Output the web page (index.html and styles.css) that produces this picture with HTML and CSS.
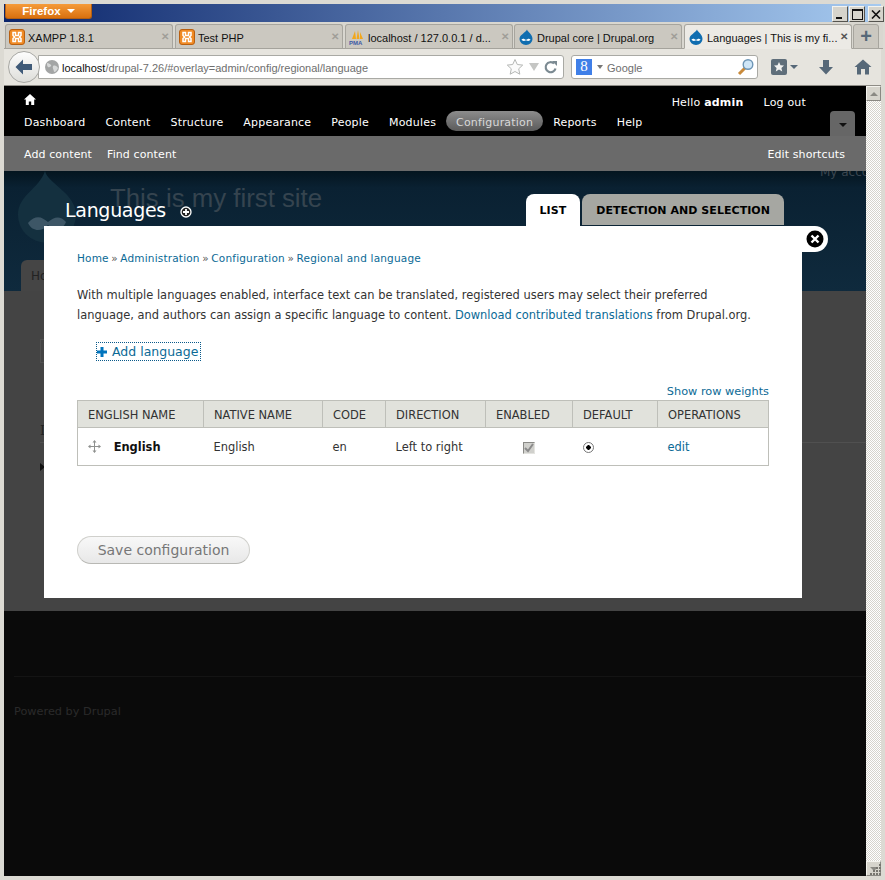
FILE: index.html
```html
<!DOCTYPE html>
<html lang="en">
<head>
    <meta charset="UTF-8">
    <meta name="viewport" content="width=device-width, initial-scale=1.0">
    <title>Languages | This is my first site</title>
    <link rel="stylesheet" href="styles.css">
</head>
<body>
    <svg class="defs" width="0" height="0">
        <symbol id="xampp" viewBox="0 0 16 16">
            <rect x="0.5" y="0.5" width="15" height="15" rx="2.5" fill="#f08a24" stroke="#b85f10"/>
            <path d="M4 3.5h2.5v3h3v-3H12v3l-1.5 1.5L12 9.5v3H9.500v-3h-3v3H4v-3L5.500 8 4 6.500z" fill="none" stroke="#fff" stroke-width="1.500"/>
        </symbol>
        <symbol id="drupal" viewBox="0 0 16 16">
            <path d="M9 0.500C9.500 3 14.500 5 14.500 10a6.500 6 0 0 1-13 0C1.500 5.500 7.500 4 9 0.500z" fill="#0f6db0"/>
            <path d="M3.500 10.500c1.500-1.500 3-.5 4.500.5 1.500-1 3-2 4.500-.5-1 2-3 1.500-4.500.8-1.500.7-3.500 1.200-4.500-.8z" fill="#fff"/>
        </symbol>
        <symbol id="pma" viewBox="0 0 16 16">
            <path d="M3 10L6 2l1 8zM7.500 10L9 1l1.500 9zM11 10l0-7 3 7z" fill="#f2a71b"/>
            <text x="0" y="15.500" font-family="Liberation Sans" font-size="6" font-weight="700" fill="#3b5aa6">PMA</text>
        </symbol>
    </svg>

    <div class="window">
        <header class="titlebar">
            <button class="firefox-btn">Firefox <span class="caret"></span></button>
            <div class="win-buttons">
                <span class="win-btn"><i class="win-min"></i></span>
                <span class="win-btn"><i class="win-max"></i></span>
                <span class="win-btn win-close">
                    <svg width="10" height="9" viewBox="0 0 10 9"><path d="M1 0.500l8 8M9 0.500l-8 8" stroke="#111" stroke-width="1.600"/></svg>
                </span>
            </div>
        </header>

        <div class="tabstrip">
            <div class="tab"><svg class="favicon"><use href="#xampp"/></svg><span class="tab-title">XAMPP 1.8.1</span><span class="tab-x">✕</span></div>
            <div class="tab"><svg class="favicon"><use href="#xampp"/></svg><span class="tab-title">Test PHP</span><span class="tab-x">✕</span></div>
            <div class="tab"><svg class="favicon"><use href="#pma"/></svg><span class="tab-title">localhost / 127.0.0.1 / d...</span><span class="tab-x">✕</span></div>
            <div class="tab"><svg class="favicon"><use href="#drupal"/></svg><span class="tab-title">Drupal core | Drupal.org</span><span class="tab-x">✕</span></div>
            <div class="tab tab-active"><svg class="favicon"><use href="#drupal"/></svg><span class="tab-title">Languages | This is my fi...</span><span class="tab-x">✕</span></div>
            <div class="tab-new">+</div>
        </div>

        <div class="navbar">
            <div class="back-btn">
                <svg width="20" height="18" viewBox="0 0 20 18"><path d="M9 1.500L1.500 9 9 16.500v-4.500h9V6H9z" fill="#3f5a78"/></svg>
            </div>
            <div class="urlbar">
                <svg class="globe" width="16" height="16" viewBox="0 0 16 16"><circle cx="8" cy="8" r="7" fill="#a3a5a5"/><path d="M3 4c2 0 3 1 4 2S5 9 4 8 3 6 3 4zm6 3c2-1 4 0 5 2-1 2-2 4-4 4 0-2-2-4-1-6z" fill="#d6d8d8"/></svg>
                <span class="url"><span class="url-host">localhost</span>/drupal-7.26/#overlay=admin/config/regional/language</span>
                <svg class="url-star" width="18" height="18" viewBox="0 0 18 18"><path d="M9 1.500l2.300 5 5.400.6-4 3.700 1.100 5.400L9 13.500l-4.800 2.700 1.100-5.400-4-3.700 5.400-.6z" fill="#fbfbfb" stroke="#b5b7b5"/></svg>
                <span class="url-drop"></span>
                <svg class="url-reload" width="14" height="14" viewBox="0 0 14 14"><path d="M11.500 8.500A5 5 0 1 1 10 3.500" fill="none" stroke="#7b8a92" stroke-width="2.200"/><path d="M8 1h5v5z" fill="#7b8a92"/></svg>
            </div>
            <div class="searchbar">
                <span class="engine">8</span>
                <span class="search-drop"></span>
                <span class="search-text">Google</span>
                <svg class="search-glass" width="18" height="18" viewBox="0 0 18 18"><path d="M8 10l-6 6" stroke="#c98a3a" stroke-width="3"/><circle cx="11" cy="6.500" r="4.800" fill="#cfe6f7" stroke="#6d95b5" stroke-width="1.400"/></svg>
            </div>
            <div class="nav-tools">
                <span class="bookmarks">
                    <svg width="16" height="16" viewBox="0 0 16 16"><rect width="16" height="16" rx="2" fill="#5f6e7a"/><path d="M8 3l1.500 3.200 3.500.4-2.600 2.300.8 3.500L8 10.500l-3.200 1.900.8-3.500L3 6.600l3.500-.4z" fill="#f2f2f0"/></svg>
                    <span class="tool-caret"></span>
                </span>
                <svg width="16" height="16" viewBox="0 0 16 16"><path d="M5 1h6v7h4l-7 7.500L1 8h4z" fill="#566878"/></svg>
                <svg width="18" height="16" viewBox="0 0 18 16"><path d="M9 0.500L0.500 8h2.500v7.500h4V10h4v5.500h4V8h2.500z" fill="#566878"/></svg>
            </div>
        </div>

        <div class="viewport">
            <div class="page">
                <div class="toolbar">
                    <div class="toolbar-top">
                        <svg class="home-icon" width="12" height="11" viewBox="0 0 12 11"><path d="M6 0L0 5.500h1.800V11h3V7.500h2.400V11h3V5.500H12z" fill="#fff"/></svg>
                        <div class="user-links"><span>Hello <b>admin</b></span><span>Log out</span></div>
                    </div>
                    <nav class="toolbar-menu">
                        <a>Dashboard</a>
                        <a>Content</a>
                        <a>Structure</a>
                        <a>Appearance</a>
                        <a>People</a>
                        <a>Modules</a>
                        <a class="active">Configuration</a>
                        <a>Reports</a>
                        <a>Help</a>
                        <span class="shortcut-toggle"><i></i></span>
                    </nav>
                </div>
                <div class="shortcuts">
                    <a>Add content</a>
                    <a>Find content</a>
                    <a class="edit-shortcuts">Edit shortcuts</a>
                </div>

                <div class="site-header">
                    <div class="site-branding">
                        <svg class="site-logo" width="58" height="72" viewBox="0 0 58 72"><path d="M27 0c3 13 31 22 31 44a29 28 0 0 1-58 0C0 24 21 18 27 0z" fill="#14303f"/><path d="M10 52c8-9 14-6 20-1 6-5 12-7 18 0-5 11-13 8-18 3-5 6-15 8-20-2z" fill="#3d5666"/></svg>
                        <div class="site-name">This is my first site</div>
                    </div>
                    <div class="secondary-menu">My account</div>
                    <div class="primary-tab">Home</div>
                </div>
                <div class="page-body">
                    <div class="search-box"></div>
                    <div class="block-title">Inline</div>
                    <div class="block-arrow"></div>
                </div>
                <footer class="site-footer">
                    <div class="footer-text">Powered by Drupal</div>
                </footer>

                <!-- оверлей поверх страницы -->
                <div class="overlay">
                    <div class="overlay-head">
                        <h1>Languages</h1>
                        <svg class="add-shortcut" width="12" height="12" viewBox="0 0 12 12"><circle cx="6" cy="6" r="5" fill="#222" stroke="#fff" stroke-width="1.300"/><path d="M3 6h6M6 3v6" stroke="#fff" stroke-width="1.800"/></svg>
                        <div class="overlay-tabs">
                            <a class="overlay-tab current">LIST</a>
                            <a class="overlay-tab">DETECTION AND SELECTION</a>
                        </div>
                    </div>
                    <div class="modal">
                        <div class="close-btn">
                            <svg width="18" height="18" viewBox="0 0 18 18"><circle cx="9" cy="9" r="8.500" fill="#000"/><path d="M5.500 5.500l7 7M12.500 5.500l-7 7" stroke="#fff" stroke-width="2.400"/></svg>
                        </div>
                        <div class="breadcrumb">
                            <a>Home</a><span>»</span><a>Administration</a><span>»</span><a>Configuration</a><span>»</span><a>Regional and language</a>
                        </div>
                        <p class="intro">With multiple languages enabled, interface text can be translated, registered users may select their preferred<br>language, and authors can assign a specific language to content. <a>Download contributed translations</a> from Drupal.org.</p>
                        <div class="action-links">
                            <a class="add-link">
                                <svg width="10" height="10" viewBox="0 0 10 10"><path d="M3.500 0h3v3.500H10v3H6.500V10h-3V6.500H0v-3h3.500z" fill="#0074bd"/></svg>
                                Add language
                            </a>
                        </div>
                        <div class="weights"><a>Show row weights</a></div>
                        <table class="lang-table">
                            <thead>
                                <tr>
                                    <th class="col-english">ENGLISH NAME</th>
                                    <th class="col-native">NATIVE NAME</th>
                                    <th class="col-code">CODE</th>
                                    <th class="col-direction">DIRECTION</th>
                                    <th class="col-enabled">ENABLED</th>
                                    <th class="col-default">DEFAULT</th>
                                    <th>OPERATIONS</th>
                                </tr>
                            </thead>
                            <tbody>
                                <tr>
                                    <td class="name-cell">
                                        <svg class="drag" width="13" height="13" viewBox="0 0 13 13"><path d="M6.500 0l2 2.500H7V6h3.500V4.500L13 6.500 10.500 8.500V7H7v3.500h1.500l-2 2.500-2-2.500H6V7H2.500v1.500L0 6.500 2.500 4.500V6H6V2.500H4.500z" fill="#8f918f"/></svg>
                                        <b>English</b>
                                    </td>
                                    <td>English</td>
                                    <td>en</td>
                                    <td>Left to right</td>
                                    <td class="cell-center"><span class="checkbox">
                                        <svg width="10" height="10" viewBox="0 0 10 10"><path d="M1 5l3 3 5-7" fill="none" stroke="#8b8b8b" stroke-width="2"/></svg>
                                    </span></td>
                                    <td class="cell-radio"><span class="radio"></span></td>
                                    <td><a>edit</a></td>
                                </tr>
                            </tbody>
                        </table>
                        <button class="save-btn">Save configuration</button>
                    </div>
                </div>
            </div>

            <div class="scrollbar">
                <div class="scroll-btn"><i></i></div>
                <div class="scroll-track"></div>
                <div class="scroll-btn scroll-down">
                    <i></i>
                    <svg class="grip" width="12" height="12" viewBox="0 0 12 12"><path d="M10 0h2v2h-2zM7 3h2v2H7zM10 3h2v2h-2zM4 6h2v2H4zM7 6h2v2H7zM10 6h2v2h-2zM1 9h2v2H1zM4 9h2v2H4zM7 9h2v2H7zM10 9h2v2h-2z" fill="#77756f"/></svg>
                </div>
            </div>
        </div>
    </div>
</body>
</html>
```

FILE: styles.css
```css
/* Окно браузера */
html, body {
    margin: 0;
    height: 100%;
    overflow: hidden;
}

body {
    font-family: "DejaVu Sans", sans-serif;
    background-color: #d6d4cc;
}

.defs {
    position: absolute;
}

.window {
    width: 885px;
    height: 880px;
    box-sizing: border-box;
    padding: 4px;
    display: flex;
    flex-direction: column;
    background-color: #dcdad3;
}

.modal a {
    color: #0b6a96;
}

/* Заголовок окна */
.titlebar {
    flex: none;
    height: 18px;
    display: flex;
    justify-content: space-between;
    background: linear-gradient(to right, #0a246a, #a6caf0);
}

.firefox-btn {
    width: 87px;
    height: 15px;
    margin: 0 0 0 1px;
    padding: 0;
    border: 1px solid #b45f12;
    border-top: 0;
    border-radius: 0 0 3px 3px;
    background: linear-gradient(#f59b3a, #d9700f);
    color: #fff;
    font-family: "Liberation Sans", sans-serif;
    font-size: 11.500px;
    font-weight: 700;
    line-height: 13px;
    text-align: center;
}

.caret {
    display: inline-block;
    margin-left: 3px;
    vertical-align: 2px;
    border: 4px solid transparent;
    border-top-color: #fff;
    border-bottom: 0;
}

.win-buttons {
    display: flex;
    gap: 1px;
    margin-top: 2px;
    margin-right: -3px;
}

.win-btn {
    width: 16px;
    height: 16px;
    box-sizing: border-box;
    border: 1px solid;
    border-color: #f4f3ee #55544f #55544f #f4f3ee;
    background-color: #d6d4cc;
    display: flex;
    align-items: center;
    justify-content: center;
}

.win-close {
    margin-left: 2px;
}

.win-min {
    width: 6px;
    height: 2px;
    background-color: #111;
    margin-top: 8px;
    margin-right: 2px;
}

.win-max {
    width: 9px;
    height: 8px;
    border: 1px solid #111;
    border-top-width: 2px;
}

/* Вкладки */
.tabstrip {
    flex: none;
    height: 27px;
    display: flex;
    gap: 2px;
    padding: 2px 0 0 1px;
    box-sizing: border-box;
    background-color: #d9d7d0;
    box-shadow: inset 0 -1px #a5a39c;
    margin-right: -2px;
    font-family: "Liberation Sans", sans-serif;
    font-size: 11px;
    color: #111;
}

.tab {
    width: 168px;
    height: 25px;
    box-sizing: border-box;
    display: flex;
    align-items: center;
    gap: 2px;
    padding: 0 3px 0 3px;
    background-color: #cbc8c0;
    border: 1px solid #a7a59e;
    border-bottom: 1px solid #a5a39c;
    border-radius: 3px 3px 0 0;
}

.tab:nth-child(4) {
    margin-left: -1px;
}

.tab-active {
    background-color: #eceae5;
    border-bottom-color: #eceae5;
}

.favicon {
    width: 16px;
    height: 16px;
    flex: none;
    margin-right: 1px;
}

.tab-title {
    flex: 1;
    padding-top: 2px;
    white-space: nowrap;
    overflow: hidden;
}

.tab-x {
    flex: none;
    font-size: 10px;
    font-weight: 700;
    color: #a09e98;
}

.tab-active .tab-x {
    color: #555;
}

.tab-new {
    width: 26px;
    height: 25px;
    box-sizing: border-box;
    margin-left: -1px;
    background-color: #cbc8c0;
    border: 1px solid #a7a59e;
    border-radius: 3px 3px 0 0;
    color: #566878;
    font-size: 20px;
    font-weight: 700;
    line-height: 22px;
    text-align: center;
}

/* Адресная строка */
.navbar {
    flex: none;
    height: 37px;
    box-sizing: border-box;
    display: flex;
    align-items: center;
    padding-left: 4px;
    background-color: #e6e4de;
    border-bottom: 1px solid #8e8c86;
    font-family: "Liberation Sans", sans-serif;
    font-size: 11px;
}

.back-btn {
    width: 32px;
    height: 32px;
    box-sizing: border-box;
    flex: none;
    border: 1px solid #a8a8a4;
    border-radius: 50%;
    background: linear-gradient(#fdfdfd, #dededa);
    display: flex;
    align-items: center;
    justify-content: center;
    position: relative;
    z-index: 1;
}

.urlbar {
    width: 526px;
    height: 24px;
    margin-left: -2px;
    box-sizing: border-box;
    flex: none;
    display: flex;
    align-items: center;
    padding: 0 5px;
    background-color: #fff;
    border: 1px solid #a9a9a4;
    border-radius: 0 3px 3px 0;
    color: #6e6e6e;
}

.globe {
    flex: none;
}

.url {
    flex: 1;
    margin-left: 2px;
    padding-top: 2px;
    white-space: nowrap;
}

.url-host {
    color: #111;
}

.url-star {
    flex: none;
}

.url-drop {
    width: 0;
    height: 0;
    margin: 0 5px;
    border: 5px solid transparent;
    border-top: 8px solid #c5c6c4;
    border-bottom: 0;
}

.searchbar {
    width: 187px;
    height: 24px;
    margin-left: 7px;
    box-sizing: border-box;
    flex: none;
    display: flex;
    align-items: center;
    padding: 0 2px 0 4px;
    background-color: #fff;
    border: 1px solid #a9a9a4;
    border-radius: 3px;
    color: #6e6e6e;
}

.engine {
    width: 16px;
    height: 16px;
    background-color: #3f7fe8;
    color: #fff;
    font-family: "Liberation Serif", serif;
    font-size: 15px;
    line-height: 15px;
    text-align: center;
}

.search-drop {
    margin: 0 4px 0 5px;
    border: 3px solid transparent;
    border-top: 4px solid #777;
    border-bottom: 0;
}

.search-text {
    flex: 1;
    padding-top: 2px;
}

.nav-tools {
    display: flex;
    align-items: center;
    gap: 20px;
    margin-left: 13px;
}

.bookmarks {
    display: flex;
    align-items: center;
    gap: 3px;
}

.tool-caret {
    border: 4px solid transparent;
    border-top: 4px solid #566878;
    border-bottom: 0;
}

/* Страница */
.viewport {
    flex: 1;
    display: flex;
    min-height: 0;
}

.page {
    flex: 1;
    position: relative;
    overflow: hidden;
    display: flex;
    flex-direction: column;
    min-width: 0;
}

.toolbar {
    flex: none;
    height: 50px;
    background-color: #000;
    color: #fff;
    font-size: 11px;
    letter-spacing: 0.19px;
}

.toolbar-top {
    height: 25px;
    box-sizing: border-box;
    padding: 8px 60px 0 20px;
    display: flex;
    align-items: center;
    justify-content: space-between;
}

.home-icon {
    margin-top: -6px;
}

.user-links {
    display: flex;
    gap: 20px;
}

.toolbar-menu {
    display: flex;
    height: 25px;
    padding-left: 10px;
}

.toolbar-menu a {
    height: 20px;
    padding: 0 10px;
    color: #fff;
    line-height: 23px;
}

.toolbar-menu a.active {
    border-radius: 10px;
    background: linear-gradient(#8c8c8c, #5a5a5a);
    color: #d8d8d8;
}

.shortcut-toggle {
    width: 25px;
    height: 25px;
    margin-left: auto;
    margin-right: 11px;
    border-radius: 4px 4px 0 0;
    background-color: #666;
    display: flex;
    align-items: center;
    justify-content: center;
}

.shortcut-toggle i {
    border: 4px solid transparent;
    border-top: 4px solid #111;
    border-bottom: 0;
    margin-top: 3px;
}

.shortcuts {
    flex: none;
    height: 35px;
    display: flex;
    align-items: center;
    gap: 15px;
    padding: 1px 21px 0 20px;
    box-sizing: border-box;
    background-color: #6a6a6a;
    color: #fff;
    font-size: 11px;
    letter-spacing: 0.1px;
    position: relative;
    z-index: 1;
}

.edit-shortcuts {
    margin-left: auto;
}

/* Затемнённая шапка сайта */
.site-header {
    flex: none;
    height: 120px;
    position: relative;
    box-sizing: border-box;
    background: linear-gradient(#04151f, #0a2132 14%, #0f2a3d);
}

.site-branding {
    display: flex;
    align-items: flex-start;
    gap: 34px;
    padding-left: 14px;
}

.site-logo {
    flex: none;
}

.site-name {
    margin-top: 13px;
    font-family: "Liberation Sans", sans-serif;
    font-size: 25.800px;
    color: #35444f;
    white-space: nowrap;
}

.secondary-menu {
    position: absolute;
    top: -6px;
    left: 816px;
    font-size: 12px;
    color: #3a4650;
    white-space: nowrap;
}

.primary-tab {
    position: absolute;
    left: 17px;
    bottom: 0;
    width: 60px;
    height: 31px;
    padding-left: 10px;
    box-sizing: border-box;
    border-radius: 6px 6px 0 0;
    background-color: #454545;
    color: #222;
    font-size: 12px;
    line-height: 33px;
}

.page-body {
    flex: none;
    height: 320px;
    box-sizing: border-box;
    padding: 48px 0 0 36px;
    background-color: #444;
}

.search-box {
    width: 60px;
    height: 22px;
    border: 1px solid #505050;
}

.block-title {
    margin-top: 60px;
    color: #222;
    font-family: "DejaVu Serif", serif;
    font-size: 13px;
    padding-bottom: 4px;
    border-bottom: 1px solid #505050;
}

.block-arrow {
    width: 0;
    margin-top: 20px;
    border: 4px solid transparent;
    border-left: 5px solid #111;
    border-right: 0;
}

.site-footer {
    flex: 1;
    box-sizing: border-box;
    padding: 65px 0 0 10px;
    background-color: #0a0a0a;
}

.footer-text {
    padding-top: 28px;
    border-top: 1px solid #141414;
    color: #2a2a2a;
    font-size: 11.300px;
}

/* Оверлей */
.overlay {
    position: absolute;
    left: 0;
    top: 0;
    width: 862px;
    padding: 108px 0 0 40px;
    box-sizing: border-box;
}

.overlay-head {
    width: 740px;
    height: 32px;
    display: flex;
    align-items: flex-end;
}

.overlay-head h1 {
    margin: 0 0 3px 21px;
    color: #fff;
    font-size: 19px;
    font-weight: 400;
    letter-spacing: -0.3px;
    line-height: 26px;
}

.add-shortcut {
    margin: 0 0 8px 14px;
}

.overlay-tabs {
    margin-left: auto;
    display: flex;
    gap: 2px;
    align-items: flex-start;
    height: 32px;
}

.overlay-tab {
    height: 31px;
    padding: 0 14px;
    border-radius: 8px 8px 0 0;
    background-color: #a6a7a2;
    color: #000;
    font-size: 11px;
    font-weight: 700;
    letter-spacing: 0.05px;
    line-height: 33px;
}

.overlay-tab.current {
    height: 32px;
    background-color: #fff;
}

.modal {
    position: relative;
    width: 758px;
    height: 372px;
    box-sizing: border-box;
    padding: 23px 33px 0;
    background-color: #fff;
    color: #333;
    font-size: 11.450px;
}

.close-btn {
    position: absolute;
    left: 100%;
    top: 0;
    margin-left: -6px;
    width: 32px;
    height: 26px;
    box-sizing: border-box;
    padding: 4px 0 0 10px;
    border-radius: 0 13px 13px 0;
    background-color: #fff;
}

.breadcrumb {
    height: 18px;
    display: flex;
    font-size: 10.500px;
    letter-spacing: 0.18px;
    line-height: 18px;
}

.breadcrumb span {
    margin: 0 2.500px;
    color: #555;
}

.intro {
    margin: 18px 0 0;
    line-height: 20px;
    white-space: nowrap;
}

.action-links {
    margin-top: 18px;
    padding-left: 20px;
    height: 18px;
}

.add-link {
    display: inline-flex;
    align-items: center;
    gap: 5px;
    height: 17px;
    padding-right: 2px;
    font-size: 12.500px;
    outline: 1px dotted #0a5a8a;
    line-height: 17px;
}

.weights {
    margin-top: 22px;
    text-align: right;
    line-height: 17px;
    height: 17px;
    font-size: 11.300px;
}

.lang-table {
    width: 692px;
    border-collapse: collapse;
    table-layout: fixed;
    border: 1px solid #bebfb9;
    font-size: 11.450px;
}

.lang-table th {
    box-sizing: border-box;
    height: 27px;
    padding: 1px 10px 0;
    background-color: #e1e2dc;
    border: 1px solid #bebfb9;
    color: #333;
    font-weight: 400;
    text-align: left;
    white-space: nowrap;
}

.lang-table td {
    height: 37px;
    padding: 0 10px;
}

.col-english { width: 126px; }
.col-native { width: 119px; }
.col-code { width: 63px; }
.col-direction { width: 100px; }
.col-enabled { width: 87px; }
.col-default { width: 85px; }

.name-cell {
    white-space: nowrap;
}

.name-cell b {
    margin-left: 9px;
    color: #111;
}

.drag {
    vertical-align: -2px;
}

.cell-center {
    text-align: center;
}

.checkbox {
    display: inline-flex;
    width: 12px;
    height: 12px;
    box-sizing: border-box;
    vertical-align: -3px;
    background-color: #d0d0cc;
    border: 1px solid;
    border-color: #8a8a86 #e4e4e0 #e4e4e0 #8a8a86;
}

.radio {
    display: inline-block;
    width: 11px;
    height: 11px;
    box-sizing: border-box;
    vertical-align: -2px;
    border-radius: 50%;
    border: 1px solid #777;
    background: radial-gradient(circle, #000 2px, #fff 2.500px);
}

.save-btn {
    display: block;
    width: 173px;
    height: 28px;
    margin-top: 70px;
    padding: 0;
    border: 1px solid #d0d0cc;
    border-bottom-color: #b8b8b4;
    border-radius: 14px;
    background: linear-gradient(#f8f8f8, #e8e8e8);
    color: #777;
    font-family: "DejaVu Sans", sans-serif;
    font-size: 14px;
}

/* Полоса прокрутки */
.scrollbar {
    flex: none;
    width: 15px;
    display: flex;
    flex-direction: column;
    background-color: #fff;
}

.scroll-btn {
    position: relative;
    height: 15px;
    box-sizing: border-box;
    flex: none;
    background-color: #d6d4cc;
    border: 1px solid;
    border-color: #f4f3ee #8a8983 #8a8983 #f4f3ee;
    display: flex;
    align-items: center;
    justify-content: center;
}

.scroll-btn i {
    border: 4px solid transparent;
    border-bottom: 4px solid #8a8983;
    border-top: 0;
}

.scroll-down i {
    border-top: 4px solid #8a8983;
    border-bottom: 0;
}

.grip {
    position: absolute;
    right: -1px;
    bottom: -1px;
}

.scroll-track {
    flex: 1;
    background: repeating-conic-gradient(#d6d4cc 0 25%, #fff 0 50%) 0 0 / 2px 2px;
}
```
